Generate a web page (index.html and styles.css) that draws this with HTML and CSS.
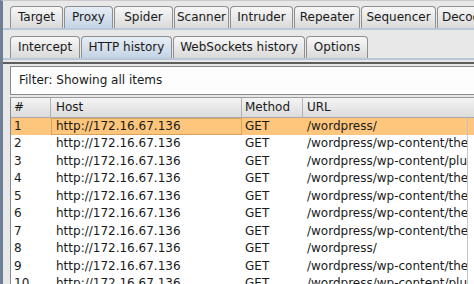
FILE: index.html
```html
<!DOCTYPE html>
<html>
<head>
<meta charset="utf-8">
<link rel="stylesheet" href="styles.css">
</head>
<body>
<div class="window">
  <div class="tabbar main">
    <div class="tab t-target">Target</div>
    <div class="tab sel t-proxy">Proxy</div>
    <div class="tab t-spider">Spider</div>
    <div class="tab t-scanner">Scanner</div>
    <div class="tab t-intruder">Intruder</div>
    <div class="tab t-repeater">Repeater</div>
    <div class="tab t-sequencer">Sequencer</div>
    <div class="tab t-decoder">Decoder</div>
  </div>
  <div class="panel">
    <div class="tabbar sub">
      <div class="tab s-intercept">Intercept</div>
      <div class="tab sel s-history">HTTP history</div>
      <div class="tab s-ws">WebSockets history</div>
      <div class="tab s-options">Options</div>
    </div>
    <div class="subpanel">
      <div class="filter">Filter: Showing all items</div>
      <div class="table">
        <div class="row head">
          <div class="c num">#</div>
          <div class="c host">Host</div>
          <div class="c method">Method</div>
          <div class="c url">URL</div>
        </div>
        <div class="row selrow">
          <div class="c num">1</div>
          <div class="c host focus">http://172.16.67.136</div>
          <div class="c method">GET</div>
          <div class="c url">/wordpress/</div>
        </div>
        <div class="row"><div class="c num">2</div><div class="c host">http://172.16.67.136</div><div class="c method">GET</div><div class="c url">/wordpress/wp-content/themes/</div></div>
        <div class="row"><div class="c num">3</div><div class="c host">http://172.16.67.136</div><div class="c method">GET</div><div class="c url">/wordpress/wp-content/plugins/</div></div>
        <div class="row"><div class="c num">4</div><div class="c host">http://172.16.67.136</div><div class="c method">GET</div><div class="c url">/wordpress/wp-content/themes/</div></div>
        <div class="row"><div class="c num">5</div><div class="c host">http://172.16.67.136</div><div class="c method">GET</div><div class="c url">/wordpress/wp-content/themes/</div></div>
        <div class="row"><div class="c num">6</div><div class="c host">http://172.16.67.136</div><div class="c method">GET</div><div class="c url">/wordpress/wp-content/themes/</div></div>
        <div class="row"><div class="c num">7</div><div class="c host">http://172.16.67.136</div><div class="c method">GET</div><div class="c url">/wordpress/wp-content/themes/</div></div>
        <div class="row"><div class="c num">8</div><div class="c host">http://172.16.67.136</div><div class="c method">GET</div><div class="c url">/wordpress/</div></div>
        <div class="row"><div class="c num">9</div><div class="c host">http://172.16.67.136</div><div class="c method">GET</div><div class="c url">/wordpress/wp-content/themes/</div></div>
        <div class="row"><div class="c num">10</div><div class="c host">http://172.16.67.136</div><div class="c method">GET</div><div class="c url">/wordpress/wp-content/plugins/</div></div>
      </div>
    </div>
  </div>
</div>
</body>
</html>
```
FILE: styles.css
```css
html, body {
  margin: 0;
  padding: 0;
  width: 474px;
  height: 284px;
  overflow: hidden;
  background: #e8e8e8;
  font-family: "DejaVu Sans", "Liberation Sans", sans-serif;
  font-size: 12px;
  color: #1a1a1a;
}

.window {
  height: 284px;
  border-left: 3px solid #6f7f93;
  border-top: 1px solid #c9c9c9;
  box-sizing: border-box;
  overflow: hidden;
  background: #e8e8e8;
}

.tabbar {
  display: flex;
  align-items: flex-end;
  white-space: nowrap;
}

.tabbar.main {
  padding: 5px 0 0 7px;
  height: 22px;
  border-bottom: 2px solid #b9c7d8;
}

.tabbar.sub {
  padding: 6px 0 0 7px;
  height: 22px;
  border-bottom: 2px solid #b9c7d8;
}

.tab {
  box-sizing: border-box;
  height: 22px;
  line-height: 21px;
  text-align: center;
  border: 1px solid #8f8f8f;
  border-bottom: none;
  border-radius: 4px 4px 0 0;
  background: linear-gradient(#f7f7f7, #dadada);
  margin-right: 1px;
  color: #1a1a1a;
  flex: none;
}

.tab.sel {
  background: linear-gradient(#e6edf5, #c4d4e5);
}

.t-target { width: 53px; }
.t-proxy { width: 49px; }
.t-spider { width: 59px; }
.t-scanner { width: 55px; }
.t-intruder { width: 63px; }
.t-repeater { width: 66px; }
.t-sequencer { width: 75px; }
.t-decoder { width: 70px; text-align: left; padding-left: 4px; }

.s-intercept { width: 70px; }
.s-history { width: 91px; }
.s-ws { width: 132px; }
.s-options { width: 62px; }

.subpanel {
  border-top: 2px solid #5e5e5e;
  margin-top: 2px;
  padding: 2px 0 0 7px;
}

.filter {
  box-sizing: border-box;
  height: 29px;
  line-height: 27px;
  background: #fdfdfd;
  border: 1px solid #8a8a8a;
  border-right: none;
  padding-left: 8px;
}

.table {
  margin-top: 2px;
  background: #ffffff;
  border-left: 1px solid #8a8a8a;
  border-top: 1px solid #9a9a9a;
}

.row {
  display: grid;
  grid-template-columns: 40px 191px 61px 1fr;
  height: 17.45px;
  line-height: 17.45px;
  white-space: nowrap;
}

.row.head {
  height: 19px;
  line-height: 19px;
  background: linear-gradient(#f4f4f4, #dcdcdc);
  border-bottom: 1px solid #a8a8a8;
  margin-bottom: 0;
}

.row.head .c {
  border-right: 1px solid #b2b2b2;
}

.row.head .c.url {
  border-right: none;
}

.c {
  overflow: hidden;
  padding-left: 3px;
  box-sizing: border-box;
}

.c.host { padding-left: 5px; }
.c.url { padding-left: 4px; border-right: 1px solid #c4c4c4; width: 165px; }
.row.head .c.url { width: auto; }

.selrow {
  background: #fdc67c;
}

.focus {
  outline: 1px solid #d9a35a;
  outline-offset: -1px;
}
```
